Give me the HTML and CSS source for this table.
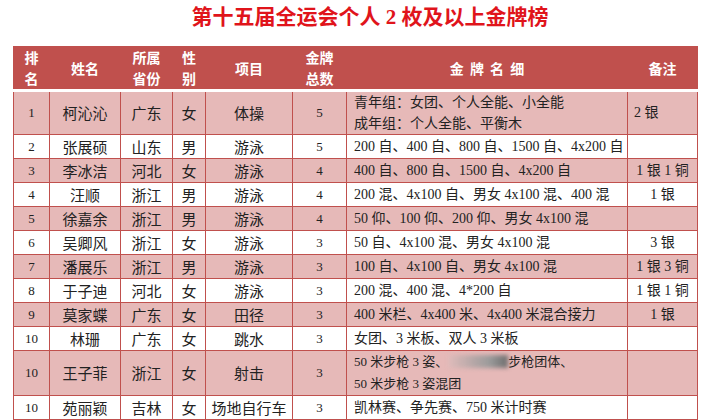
FILE: index.html
```html
<!DOCTYPE html>
<html lang="zh">
<head>
<meta charset="utf-8">
<title>第十五届全运会个人2枚及以上金牌榜</title>
<link rel="stylesheet" href="styles.css">
</head>
<body>
<div class="page">
  <h1 class="title">第十五届全运会个人 2 枚及以上金牌榜</h1>
  <table class="board">
    <colgroup>
      <col class="c-rank"><col class="c-name"><col class="c-prov"><col class="c-sex"><col class="c-event"><col class="c-count"><col class="c-list"><col class="c-note">
    </colgroup>
    <thead>
      <tr class="head">
        <th>排<br>名</th>
        <th>姓名</th>
        <th>所属<br>省份</th>
        <th>性<br>别</th>
        <th>项目</th>
        <th>金牌<br>总数</th>
        <th class="spaced">金 牌 名 细</th>
        <th>备注</th>
      </tr>
    </thead>
    <tbody>
      <tr class="pink tall">
        <td>1</td><td>柯沁沁</td><td>广东</td><td>女</td><td>体操</td><td>5</td>
        <td class="list two">青年组：女团、个人全能、小全能<br>成年组：个人全能、平衡木</td>
        <td class="note left">2 银</td>
      </tr>
      <tr class="white">
        <td>2</td><td>张展硕</td><td>山东</td><td>男</td><td>游泳</td><td>5</td>
        <td class="list">200 自、400 自、800 自、1500 自、4x200 自</td>
        <td class="note"></td>
      </tr>
      <tr class="pink">
        <td>3</td><td>李冰洁</td><td>河北</td><td>女</td><td>游泳</td><td>4</td>
        <td class="list">400 自、800 自、1500 自、4x200 自</td>
        <td class="note">1 银 1 铜</td>
      </tr>
      <tr class="white">
        <td>4</td><td>汪顺</td><td>浙江</td><td>男</td><td>游泳</td><td>4</td>
        <td class="list">200 混、4x100 自、男女 4x100 混、400 混</td>
        <td class="note">1 银</td>
      </tr>
      <tr class="pink">
        <td>5</td><td>徐嘉余</td><td>浙江</td><td>男</td><td>游泳</td><td>4</td>
        <td class="list">50 仰、100 仰、200 仰、男女 4x100 混</td>
        <td class="note"></td>
      </tr>
      <tr class="white">
        <td>6</td><td>吴卿风</td><td>浙江</td><td>女</td><td>游泳</td><td>3</td>
        <td class="list">50 自、4x100 混、男女 4x100 混</td>
        <td class="note">3 银</td>
      </tr>
      <tr class="pink">
        <td>7</td><td>潘展乐</td><td>浙江</td><td>男</td><td>游泳</td><td>3</td>
        <td class="list">100 自、4x100 自、男女 4x100 混</td>
        <td class="note">1 银 3 铜</td>
      </tr>
      <tr class="white">
        <td>8</td><td>于子迪</td><td>河北</td><td>女</td><td>游泳</td><td>3</td>
        <td class="list">200 混、400 混、4*200 自</td>
        <td class="note">1 银 1 铜</td>
      </tr>
      <tr class="pink">
        <td>9</td><td>莫家蝶</td><td>广东</td><td>女</td><td>田径</td><td>3</td>
        <td class="list">400 米栏、4x400 米、4x400 米混合接力</td>
        <td class="note">1 银</td>
      </tr>
      <tr class="white">
        <td>10</td><td>林珊</td><td>广东</td><td>女</td><td>跳水</td><td>3</td>
        <td class="list">女团、3 米板、双人 3 米板</td>
        <td class="note"></td>
      </tr>
      <tr class="pink taller">
        <td>10</td><td>王子菲</td><td>浙江</td><td>女</td><td>射击</td><td>3</td>
        <td class="list two wide">50 米步枪 3 姿、<span class="blur"></span>步枪团体、<br>50 米步枪 3 姿混团</td>
        <td class="note"></td>
      </tr>
      <tr class="white">
        <td>10</td><td>苑丽颖</td><td>吉林</td><td>女</td><td>场地自行车</td><td>3</td>
        <td class="list">凯林赛、争先赛、750 米计时赛</td>
        <td class="note"></td>
      </tr>
    </tbody>
  </table>
</div>
</body>
</html>
```
FILE: styles.css
```css
html, body {
  margin: 0;
  padding: 0;
  background: #ffffff;
}
.page {
  padding: 0 0 0 13px;
  width: 684px;
}
.title {
  margin: 0;
  padding: 5px 0 0 30px;
  height: 46px;
  box-sizing: border-box;
  text-align: center;
  font-family: "Liberation Serif", "Noto Sans CJK SC", serif;
  font-weight: 700;
  font-size: 21px;
  line-height: 24px;
  color: #e0141b;
}
.board {
  border-collapse: collapse;
  table-layout: fixed;
  width: 684px;
  font-family: "Liberation Serif", "Noto Sans CJK SC", serif;
  font-size: 13px;
  color: #222222;
}
.c-rank { width: 36px; }
.c-name { width: 71px; }
.c-prov { width: 52px; }
.c-sex { width: 33px; }
.c-event { width: 87px; }
.c-count { width: 54px; }
.c-list { width: 281px; }
.c-note { width: 70px; }

.head th {
  background: #c0504d;
  color: #ffffff;
  font-family: "Noto Sans CJK SC", sans-serif;
  font-weight: 700;
  font-size: 14px;
  line-height: 21px;
  height: 41px;
  padding: 0;
  border-left: 1px solid #c0504d;
  border-right: 1px solid #c0504d;
  border-top: 1px solid #c0504d;
  border-bottom: 3px solid #ffffff;
  text-align: center;
  vertical-align: middle;
}
.head th.spaced {
  word-spacing: 3px;
}
.board td {
  border: 1px solid #c0504d;
  padding: 0;
  height: 23px;
  text-align: center;
  vertical-align: middle;
  line-height: 20px;
  font-size: 13px;
  white-space: nowrap;
}
.board td:nth-child(2),
.board td:nth-child(3),
.board td:nth-child(4),
.board td:nth-child(5) {
  font-family: "Noto Sans CJK SC", sans-serif;
  font-size: 15px;
}
.pink td { background: #e6b9b8; }
.white td { background: #ffffff; }
.tall td { height: 40px; }
.taller td { height: 42px; }
.board td.list {
  text-align: left;
  padding-left: 7px;
  font-size: 14px;
}
.board td.two {
  line-height: 21px;
  font-size: 14px;
}
.board td.wide {
  line-height: 22px;
  font-size: 13px;
}
.board td.note {
  font-size: 14px;
}
.board td.left {
  text-align: left;
  padding-left: 6px;
}
.blur {
  display: inline-block;
  width: 60px;
  height: 13px;
  vertical-align: -2px;
  background: linear-gradient(90deg, rgba(200,200,200,0.2), #9a9a9a 70%, #6e6e6e);
  filter: blur(2px);
}
```
